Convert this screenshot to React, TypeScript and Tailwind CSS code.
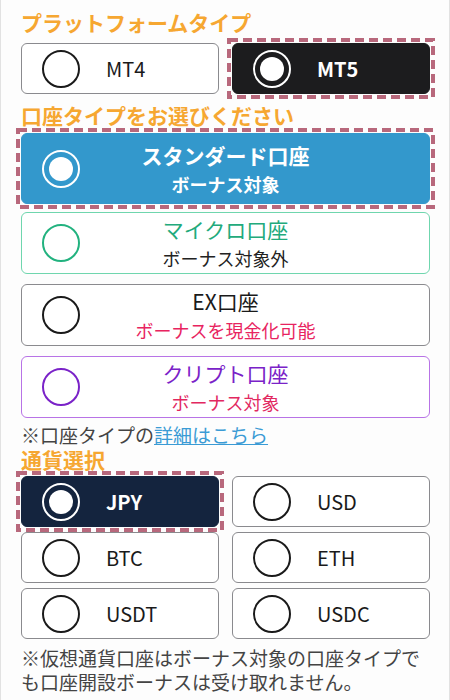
import { useState } from 'react'

const font = { fontFamily: '"Noto Sans CJK JP", "Noto Sans", sans-serif' }

function Radio({ checked, ring }: { checked: boolean; ring: string }) {
  return (
    <span className={`flex h-[38px] w-[38px] shrink-0 items-center justify-center rounded-full border-2 ${ring}`}>
      {checked && <span className="h-[24px] w-[24px] rounded-full bg-white" />}
    </span>
  )
}

// dashed selection frame drawn over the chosen option
function Dashed() {
  return (
    <svg className="pointer-events-none absolute -inset-[6px] h-[calc(100%+12px)] w-[calc(100%+12px)]">
      <rect
        x="2"
        y="2"
        className="h-[calc(100%-4px)] w-[calc(100%-4px)]"
        fill="none"
        stroke="#b8687c"
        strokeWidth="4"
        strokeDasharray="9 5"
      />
    </svg>
  )
}

export default function App() {
  const [platform, setPlatform] = useState('MT5')
  const [account, setAccount] = useState('standard')
  const [currency, setCurrency] = useState('JPY')

  const accounts = [
    { id: 'standard', name: 'スタンダード口座', sub: 'ボーナス対象', border: 'border-[#5dd1a4]', title: 'text-[#1fa67a]', subColor: 'text-[#222]', ring: 'border-[#1fb57f]' },
    { id: 'micro', name: 'マイクロ口座', sub: 'ボーナス対象外', border: 'border-[#6fd6ae]', title: 'text-[#22aa7c]', subColor: 'text-[#222]', ring: 'border-[#22b27f]' },
    { id: 'ex', name: 'EX口座', sub: 'ボーナスを現金化可能', border: 'border-[#8a8a8e]', title: 'text-[#1a1a1a]', subColor: 'text-[#e8245f]', ring: 'border-[#1a1a1a]' },
    { id: 'crypto', name: 'クリプト口座', sub: 'ボーナス対象', border: 'border-[#b873e6]', title: 'text-[#7a22c8]', subColor: 'text-[#e2285f]', ring: 'border-[#7a22c8]' },
  ]

  return (
    <div style={font} className="min-h-[700px] w-[450px] border-x border-[#e2e2e2] bg-[#fdfdfd] pl-[20px] pr-[19px] pt-[8px]">
      {/* プラットフォーム */}
      <h2 className="text-[21px] font-bold leading-[28px] text-[#f6a731]">プラットフォームタイプ</h2>
      <div className="mt-[7px] grid grid-cols-2 gap-[13px]">
        {['MT4', 'MT5'].map((p) => {
          const on = platform === p
          return (
            <button
              key={p}
              onClick={() => setPlatform(p)}
              className={`relative flex h-[51px] items-center gap-[26px] rounded-[6px] border pl-[20px] ${
                on ? 'border-[#1c1c1e] bg-[#1c1c1e] text-white' : 'border-[#8a8a8e] bg-white text-[#1a1a1a]'
              }`}
            >
              <Radio checked={on} ring={on ? 'border-white' : 'border-[#1a1a1a]'} />
              <span className={`text-[20px] ${on ? 'font-bold' : 'font-normal'}`}>{p}</span>
              {on && <Dashed />}
            </button>
          )
        })}
      </div>

      {/* 口座タイプ */}
      <h2 className="mt-[7px] text-[21px] font-bold leading-[28px] text-[#f6a731]">口座タイプをお選びください</h2>
      <div className="mt-[4px] flex flex-col gap-[10px]">
        {accounts.map((a) => {
          const on = account === a.id
          return (
            <button
              key={a.id}
              onClick={() => setAccount(a.id)}
              className={`relative grid grid-cols-[58px_1fr_58px] items-center rounded-[6px] border ${
                on ? 'mb-[-2px] h-[71px] border-[#3398cc] bg-[#3398cc]' : `h-[62px] bg-white ${a.border}`
              }`}
            >
              <span className="pl-[20px]">
                <Radio checked={on} ring={on ? 'border-white' : a.ring} />
              </span>
              <span className="flex flex-col items-center">
                <span className={`text-[21px] leading-[30px] ${on ? 'font-bold text-white' : `font-normal ${a.title}`}`}>{a.name}</span>
                <span className={`text-[18px] leading-[28px] ${on ? 'font-bold text-white' : `font-normal ${a.subColor}`}`}>{a.sub}</span>
              </span>
              <span />
              {on && <Dashed />}
            </button>
          )
        })}
      </div>
      <p className="mt-[5px] text-[19px] leading-[24px] text-[#444]">
        ※口座タイプの<a className="text-[#3a9bd5] underline">詳細はこちら</a>
      </p>

      {/* 通貨 */}
      <h2 className="text-[21px] font-bold leading-[24px] text-[#f6a731]">通貨選択</h2>
      <div className="mt-[5px] grid grid-cols-2 gap-x-[13px] gap-y-[5px]">
        {['JPY', 'USD', 'BTC', 'ETH', 'USDT', 'USDC'].map((c) => {
          const on = currency === c
          return (
            <button
              key={c}
              onClick={() => setCurrency(c)}
              className={`relative flex h-[51px] items-center gap-[26px] rounded-[6px] border pl-[20px] ${
                on ? 'border-[#14243e] bg-[#14243e] text-white' : 'border-[#8a8a8e] bg-white text-[#1a1a1a]'
              }`}
            >
              <Radio checked={on} ring={on ? 'border-white' : 'border-[#1a1a1a]'} />
              <span className={`text-[20px] ${on ? 'font-bold' : 'font-normal'}`}>{c}</span>
              {on && <Dashed />}
            </button>
          )
        })}
      </div>
      <p className="mt-[7px] text-[19px] leading-[24px] text-[#444]">
        ※仮想通貨口座はボーナス対象の口座タイプでも口座開設ボーナスは受け取れません。
      </p>
    </div>
  )
}
